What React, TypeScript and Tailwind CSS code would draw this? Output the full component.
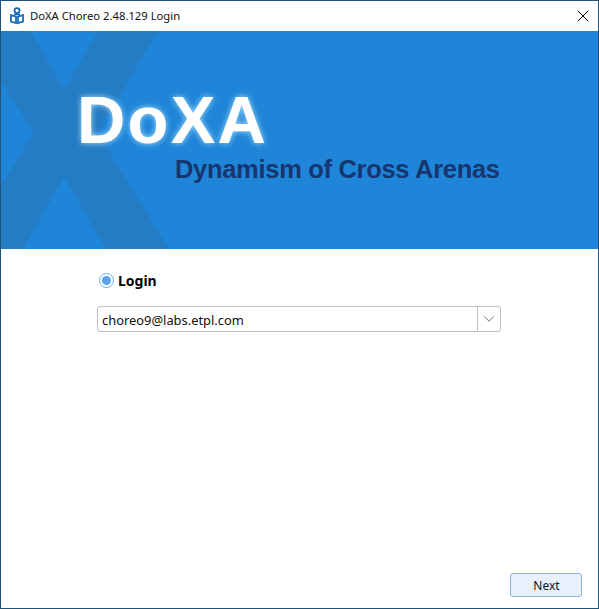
import { ChevronDown, X } from "lucide-react";

function AppIcon() {
  return (
    <svg width="16" height="18" viewBox="0 0 16 18" fill="none" stroke="#1569b8" strokeWidth="1.8">
      <circle cx="8" cy="3.6" r="2.5" />
      <path d="M2 8.2L7 9.6V16L2 14.6Z" />
      <path d="M14 8.2L9 9.6V16L14 14.6Z" />
      <path d="M5 7.4H11" />
    </svg>
  );
}

function Banner() {
  return (
    <div className="relative h-[218px] overflow-hidden bg-[#1e85d8]">
      <svg className="absolute left-0 top-0" width="597" height="218" viewBox="0 0 597 218">
        <path d="M-32 0H30L63 59L97 0H157L97 102L168 218H105L63 146L22 218H-40L33 102Z" fill="#247cc4" />
      </svg>
      <div className="absolute left-[76px] top-[50px] font-['Liberation_Sans',sans-serif] text-[67px] font-bold leading-[77px] tracking-[2.2px] text-white [text-shadow:0_0_6px_rgba(190,235,255,0.9)]">
        DoXA
      </div>
      <div className="absolute left-[174px] top-[122px] font-['Liberation_Sans',sans-serif] text-[25.5px] font-bold leading-[32px] tracking-[-0.31px] text-[#17366f]">
        Dynamism of Cross Arenas
      </div>
    </div>
  );
}

export default function App() {
  return (
    <div className="flex h-[609px] w-[599px] flex-col border-x border-b border-[#1f5379] bg-white font-['Noto_Sans',sans-serif]">
      <div className="flex h-[31px] items-center border-t border-[#1f5379] pl-[8px] pr-[5px]">
        <AppIcon />
        <span className="ml-[5px] text-[11.25px] text-[#111]">DoXA Choreo 2.48.129 Login</span>
        <X className="ml-auto h-[20px] w-[20px] text-black" strokeWidth={1.2} />
      </div>

      <Banner />

      <div className="flex-1 pl-[96px] pr-[97px] pt-[22px]">
        <label className="ml-[2px] flex items-center gap-[4px]">
          <span className="mb-[2px] flex h-[15px] w-[15px] items-center justify-center rounded-full border-[1.5px] border-[#6aaeef]">
            <span className="h-[9px] w-[9px] rounded-full bg-[#58a4ee]" />
          </span>
          <span className="text-sm font-bold text-black">Login</span>
        </label>

        <div className="mt-[15px] flex h-[26px] items-stretch rounded-[3px] border border-[#c0c0c0]">
          <div className="flex flex-1 items-center pl-[4px] pt-[3px] text-[12.9px] text-[#111]">choreo9@labs.etpl.com</div>
          <div className="flex w-[23px] items-center justify-center border-l border-[#c0c0c0]">
            <ChevronDown className="h-[18px] w-[18px] text-[#555]" strokeWidth={1.1} />
          </div>
        </div>
      </div>

      <div className="flex justify-end pb-[11px] pr-[16px]">
        <button className="h-[24px] w-[72px] rounded-[3px] border border-[#8cb4dc] bg-[#e8f1fb] pl-[1px] pt-[1px] text-xs text-[#111]">
          Next
        </button>
      </div>
    </div>
  );
}
